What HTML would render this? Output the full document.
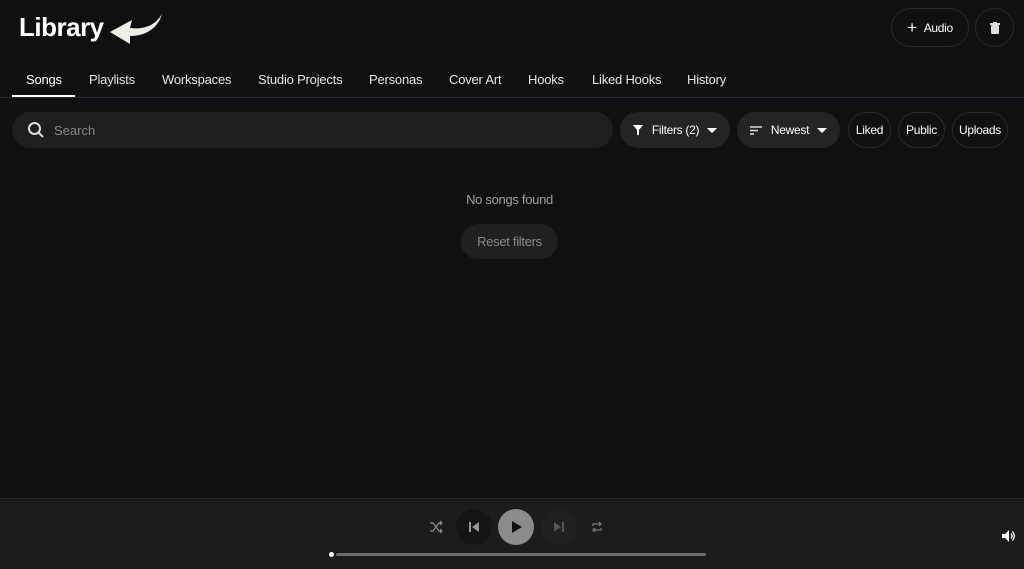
<!DOCTYPE html>
<html><head><style>
*{margin:0;padding:0;box-sizing:border-box}
body{width:1024px;height:569px;background:#101012;color:#fff;font-family:"Liberation Sans",sans-serif;position:relative;overflow:hidden}
.abs{position:absolute}
.pill{position:absolute;border-radius:20px;display:flex;align-items:center;justify-content:center;font-size:12px;letter-spacing:-0.3px}
.tab{position:absolute;top:72px;font-size:13px;color:#e6e6e6;letter-spacing:-0.2px}
</style></head><body>
<div class="abs" style="left:19px;top:12px;font-size:26px;font-weight:bold;letter-spacing:-0.5px">Library</div>
<svg class="abs" style="left:108px;top:12px" width="56" height="34" viewBox="0 0 56 34"><path d="M54 2 C48 12 38 18 22 16 L24 8 L2 20 L22 32 L22 24 C38 24 50 16 54 2Z" fill="#f0eee8"/></svg>
<div class="pill" style="left:891px;top:8px;width:78px;height:39px;border:1px solid #2a2a2c;font-size:12px"><span style="font-size:17px;margin-right:7px;font-weight:300">+</span>Audio</div>
<div class="pill" style="left:975px;top:8px;width:39px;height:39px;border:1px solid #2a2a2c"><svg width="10" height="12" viewBox="0 0 10 12"><rect x="0" y="1" width="10" height="2" fill="#ddd"/><rect x="3" y="0" width="4" height="2" fill="#ddd"/><rect x="1" y="3" width="8" height="9" rx="1" fill="#ddd"/></svg></div>
<div class="tab" style="left:26px;color:#fff">Songs</div>
<div class="abs" style="left:12px;top:95px;width:63px;height:2px;background:#fff"></div>
<div class="abs" style="left:0;top:97px;width:1024px;height:1px;background:#26262a"></div>
<div class="tab" style="left:89px">Playlists</div>
<div class="tab" style="left:162px">Workspaces</div>
<div class="tab" style="left:258px">Studio Projects</div>
<div class="tab" style="left:369px">Personas</div>
<div class="tab" style="left:449px">Cover Art</div>
<div class="tab" style="left:528px">Hooks</div>
<div class="tab" style="left:592px">Liked Hooks</div>
<div class="tab" style="left:687px">History</div>
<div class="abs" style="left:12px;top:112px;width:601px;height:36px;border-radius:18px;background:#1e1e20"></div>
<svg class="abs" style="left:27px;top:121px" width="18" height="18" viewBox="0 0 18 18"><circle cx="7.5" cy="7.5" r="5.5" stroke="#ddd" stroke-width="2" fill="none"/><path d="M11.5 11.5 L16 16" stroke="#ddd" stroke-width="2"/></svg>
<div class="abs" style="left:54px;top:123px;font-size:13px;color:#888">Search</div>
<div class="pill" style="left:620px;top:112px;width:110px;height:36px;background:#242427"><svg width="10" height="10" viewBox="0 0 10 10" style="margin-right:9px"><path d="M0 0H10L6 5V10H4V5Z" fill="#fff"/></svg>Filters (2)<span style="margin-left:8px;border-left:5px solid transparent;border-right:5px solid transparent;border-top:5px solid #fff"></span></div>
<div class="pill" style="left:737px;top:112px;width:103px;height:36px;background:#242427"><svg width="12" height="9" viewBox="0 0 12 9" style="margin-right:9px"><path d="M0 1H12M0 4.5H8M0 8H4" stroke="#ddd" stroke-width="1.4"/></svg>Newest<span style="margin-left:8px;border-left:5px solid transparent;border-right:5px solid transparent;border-top:5px solid #fff"></span></div>
<div class="pill" style="left:848px;top:112px;width:43px;height:36px;border:1px solid #2a2a2c">Liked</div>
<div class="pill" style="left:898px;top:112px;width:47px;height:36px;border:1px solid #2a2a2c">Public</div>
<div class="pill" style="left:952px;top:112px;width:56px;height:36px;border:1px solid #2a2a2c">Uploads</div>
<div class="abs" style="left:0;top:192px;width:1019px;text-align:center;font-size:13px;color:#a0a0a0;letter-spacing:-0.3px">No songs found</div>
<div class="pill" style="left:461px;top:224px;width:97px;height:35px;background:#1f1f21;color:#8a8a8a;font-size:13px">Reset filters</div>
<div class="abs" style="left:0;top:498px;width:1024px;height:71px;background:#1c1c1e;border-top:1px solid #2c2c2e"></div>
<svg class="abs" style="left:429px;top:520px" width="14" height="14" viewBox="0 0 14 14"><path d="M1 3H4L10 11H13M1 11H4L10 3H13M11 1L13 3L11 5M11 9L13 11L11 13" stroke="#8a8a8a" stroke-width="1.3" fill="none"/></svg>
<div class="abs" style="left:456px;top:509px;width:36px;height:36px;border-radius:50%;background:#141416"></div>
<svg class="abs" style="left:467px;top:520px" width="14" height="14" viewBox="0 0 14 14"><rect x="2" y="2" width="2" height="10" fill="#999"/><path d="M12 2V12L5 7Z" fill="#999"/></svg>
<div class="abs" style="left:498px;top:509px;width:36px;height:36px;border-radius:50%;background:#8c8c8c"></div>
<svg class="abs" style="left:510px;top:520px" width="14" height="14" viewBox="0 0 14 14"><path d="M2 1V13L12 7Z" fill="#111"/></svg>
<div class="abs" style="left:541px;top:509px;width:36px;height:36px;border-radius:50%;background:#202022"></div>
<svg class="abs" style="left:552px;top:520px" width="14" height="14" viewBox="0 0 14 14"><path d="M2 2V12L9 7Z" fill="#555"/><rect x="10" y="2" width="2" height="10" fill="#555"/></svg>
<svg class="abs" style="left:590px;top:520px" width="14" height="14" viewBox="0 0 14 14"><path d="M3 6V4H11M9 2L11 4L9 6M11 8V10H3M5 8L3 10L5 12" stroke="#777" stroke-width="1.3" fill="none"/></svg>
<div class="abs" style="left:336px;top:553px;width:370px;height:3px;border-radius:2px;background:#6b6b6d"></div>
<div class="abs" style="left:329px;top:552px;width:5px;height:5px;border-radius:50%;background:#fff"></div>
<svg class="abs" style="left:1001px;top:529px" width="15" height="14" viewBox="0 0 15 14"><path d="M1 5H4L8 1V13L4 9H1Z" fill="#fff"/><path d="M10 4.5Q12 7 10 9.5M11.5 2.5Q15 7 11.5 11.5" stroke="#fff" stroke-width="1.3" fill="none"/></svg>
</body></html>
